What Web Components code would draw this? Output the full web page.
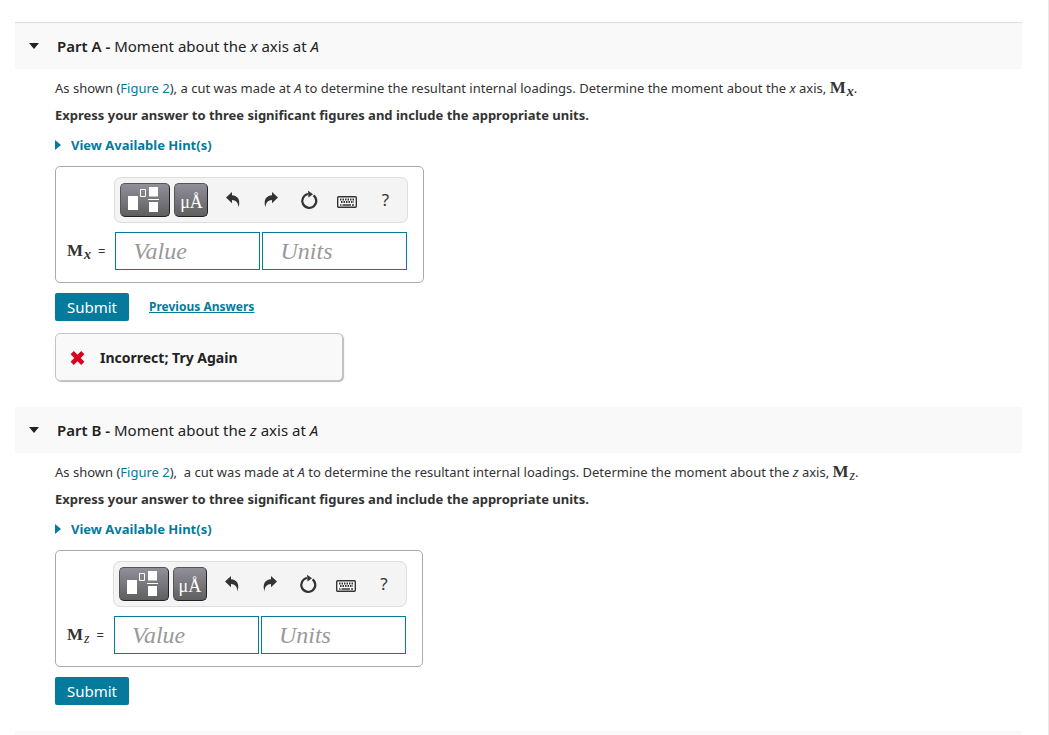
<!DOCTYPE html>
<html lang="en">
<head>
<meta charset="utf-8">
<title>Moment about an axis</title>
<style>
  body { margin: 0; background: #fff; color: #333; font-family: "Noto Sans", "Open Sans", sans-serif; font-size: 13px; line-height: 20px; }
  a { color: #047a9c; text-decoration: none; }
</style>
</head>
<body>
<problem-page>
  <problem-part ruled>
    <span slot="label">Part A -</span>
    <span slot="title">Moment about the <i>x</i> axis at <i>A</i></span>
    <span slot="question">As shown (<a href="#figure2">Figure 2</a>), a cut was made at <i>A</i> to determine the resultant internal loadings. Determine the moment about the <i>x</i> axis, <math-symbol heavy>M<span slot="sub">x</span></math-symbol>.</span>
    <answer-box slot="answer"><math-symbol heavy>M<span slot="sub">x</span></math-symbol></answer-box>
    <a slot="actions" href="#previous" style="font-weight:700;font-size:12px;text-decoration:underline">Previous Answers</a>
    <feedback-note slot="feedback">Incorrect; Try Again</feedback-note>
  </problem-part>
  <problem-part>
    <span slot="label">Part B -</span>
    <span slot="title">Moment about the <i>z</i> axis at <i>A</i></span>
    <span slot="question">As shown (<a href="#figure2">Figure 2</a>),&nbsp; a cut was made at <i>A</i> to determine the resultant internal loadings. Determine the moment about the <i>z</i> axis, <math-symbol>M<span slot="sub">z</span></math-symbol>.</span>
    <answer-box slot="answer"><math-symbol>M<span slot="sub">z</span></math-symbol></answer-box>
  </problem-part>
</problem-page>

<script>
function define(name, html) {
  const template = document.createElement('template');
  template.innerHTML = html;
  customElements.define(name, class extends HTMLElement {
    constructor() {
      super();
      this.attachShadow({ mode: 'open' }).append(template.content.cloneNode(true));
    }
  });
}

define('problem-page', `
  <style>
    :host { display: flex; flex-direction: column; box-sizing: border-box; min-height: 100vh; padding: 22px 26px 0 15px; border-right: 1px solid #e9e9e9; }
    .next { flex: 1; background: #f9f9f9; }
  </style>
  <slot></slot>
  <div class="next"></div>`);

define('math-symbol', `
  <style>
    :host { display: inline-block; font-family: "Liberation Serif", serif; font-size: 17px; font-weight: bold; line-height: 20px; }
    sub { margin-left: 1px; font-size: 14px; font-style: italic; font-weight: normal; line-height: 0; vertical-align: -3px; }
    :host([heavy]) sub { font-weight: bold; }
  </style>
  <slot></slot><sub><slot name="sub"></slot></sub>`);

define('tool-icon', `
  <style>
    :host { display: block; width: 20px; height: 20px; }
    svg { display: none; }
    :host([name=undo]) .undo, :host([name=redo]) .redo, :host([name=reset]) .reset, :host([name=keyboard]) .keyboard { display: block; }
  </style>
  <svg class="undo" width="20" height="20" viewBox="0 0 20 20"><path fill="#333" d="M3 7.500 9 2V5.300C14.500 5.600 18 9.500 15.500 17.500 15.300 12.500 13 10.200 9 10V13.200Z"/></svg>
  <svg class="redo" width="20" height="20" viewBox="0 0 20 20"><path fill="#333" d="M17 7.500 11 2V5.300C5.500 5.600 2 9.500 4.500 17.500 4.700 12.500 7 10.200 11 10V13.200Z"/></svg>
  <svg class="reset" width="20" height="20" viewBox="0 0 20 20"><path fill="none" stroke="#333" stroke-width="2.200" d="M14.500 5.300A7 7 0 1 1 9 4"/><path fill="#333" d="M9 .8 14 4.200 9.500 7.500Z"/></svg>
  <svg class="keyboard" width="20" height="20" viewBox="0 0 20 20"><rect x=".7" y="6.700" width="18.600" height="10.600" rx="1" fill="#fff" stroke="#333" stroke-width="1.400"/><path fill="none" stroke="#333" stroke-width="2" stroke-dasharray="1.500 1" d="M3 9.500H17M4 12H17"/><path fill="none" stroke="#333" stroke-width="1.500" d="M3 15H4.500M5.500 15H14M15 15H17"/></svg>`);

define('editor-toolbar', `
  <style>
    :host { display: flex; align-items: center; box-sizing: border-box; width: 294px; height: 46px; padding: 5px 3px 5px 5px; border: 1px solid #ddd; border-radius: 7px; background: #f4f4f4; }
    button { display: flex; align-items: center; justify-content: center; width: 38px; height: 34px; padding: 0; border: 0; background: none; color: #333; font: 17px/20px "Noto Sans", sans-serif; }
    .dark { width: 34px; margin-right: 6px; border: 1px solid #555; border-right-color: #222; border-bottom-color: #222; border-radius: 5px; background: linear-gradient(#918f99, #5f5f61); color: #fff; }
    .wide { width: 50px; margin-right: 4px; }
    .symbols { padding-top: 4px; font: 18px/20px "Liberation Serif", serif; }
  </style>
  <button class="dark wide" aria-label="Templates"><svg width="34" height="28" viewBox="0 0 34 28"><path fill="#fff" d="M0 10H10V24H0ZM21 1H30V10.500H21ZM21 16H30V26H21ZM20 13H31V14H20Z"/><path fill="none" stroke="#fff" d="M12.500 3.500H17.500V10.500H12.500Z"/></svg></button>
  <button class="dark symbols" aria-label="Symbols">μÅ</button>
  <button aria-label="Undo"><tool-icon name="undo"></tool-icon></button>
  <button aria-label="Redo"><tool-icon name="redo"></tool-icon></button>
  <button aria-label="Reset"><tool-icon name="reset"></tool-icon></button>
  <button aria-label="Keyboard shortcuts"><tool-icon name="keyboard"></tool-icon></button>
  <button aria-label="Help">?</button>`);

define('answer-box', `
  <style>
    :host { display: grid; grid-template-columns: auto auto; column-gap: 9px; row-gap: 9px; align-items: center; box-sizing: border-box; width: fit-content; padding: 10px 15px 12px 11px; border: 1px solid #aaa; border-radius: 5px; }
    editor-toolbar { grid-column: 2; }
    .fields { display: flex; gap: 2px; padding: 0 1px; }
    input { flex: 1; min-width: 0; width: 0; box-sizing: border-box; height: 38px; padding: 0 17px; border: 1px solid #047a9c; border-radius: 0; background: #fff; font: italic 24px/30px "Liberation Serif", serif; color: #333; }
    input::placeholder { color: #999; opacity: 1; }
    .name { display: flex; align-items: baseline; gap: 7px; }
  </style>
  <editor-toolbar></editor-toolbar>
  <div class="name"><slot></slot><span>=</span></div>
  <div class="fields"><input aria-label="Value" placeholder="Value"><input aria-label="Units" placeholder="Units"></div>`);

define('feedback-note', `
  <style>
    :host { display: flex; align-items: center; gap: 15px; box-sizing: border-box; width: 288px; height: 48px; padding: 2px 14px 0; border: 1px solid #c4c4c4; border-radius: 5px; background: #f9f9f9; box-shadow: 1px 1px 1px #bbb; color: #222; font-size: 14px; font-weight: 700; }
  </style>
  <svg width="15" height="14" viewBox="0 0 15 14"><path stroke="#db0020" stroke-width="4.500" d="M2.200 1.700 12.800 12.300M12.800 1.700 2.200 12.300"/></svg>
  <span><slot></slot></span>`);

define('problem-part', `
  <style>
    :host { display: block; margin-bottom: 26px; }
    header { display: flex; align-items: center; gap: 18px; box-sizing: border-box; height: 46px; padding: 0 14px; background: #f9f9f9; color: #222; }
    :host([ruled]) header { height: 47px; border-top: 1px solid #ddd; }
    h2 { margin: 0; font-size: 15px; font-weight: normal; }
    h2 b { font-weight: 600; }
    .body { padding: 9px 40px 0; }
    p { margin: 0 0 7px; height: 20px; white-space: nowrap; }
    .express { margin-bottom: 10px; font-weight: 700; }
    .hint { display: flex; align-items: center; gap: 10px; width: fit-content; height: 20px; margin: 0 0 11px; padding: 0; border: 0; background: none; color: #047a9c; font: 700 13px/20px "Noto Sans", sans-serif; }
    .actions { display: flex; align-items: center; gap: 20px; margin-top: 10px; }
    .submit { width: 74px; height: 28px; padding: 0 0 1px; border: 0; border-radius: 2px; background: #047a9c; color: #fff; font: 15px/20px "Noto Sans", sans-serif; }
    ::slotted(feedback-note) { margin-top: 12px; }
  </style>
  <header>
    <svg width="10" height="6" viewBox="0 0 10 6"><path fill="#222" d="M0 0H10L5 6Z"/></svg>
    <h2><b><slot name="label"></slot></b> <slot name="title"></slot></h2>
  </header>
  <div class="body">
    <p><slot name="question"></slot></p>
    <p class="express">Express your answer to three significant figures and include the appropriate units.</p>
    <button class="hint"><svg width="6" height="10" viewBox="0 0 6 10"><path fill="#047a9c" d="M0 0 6 5 0 10Z"/></svg>View Available Hint(s)</button>
    <slot name="answer"></slot>
    <div class="actions"><button class="submit">Submit</button><slot name="actions"></slot></div>
    <slot name="feedback"></slot>
  </div>`);
</script>
</body>
</html>
